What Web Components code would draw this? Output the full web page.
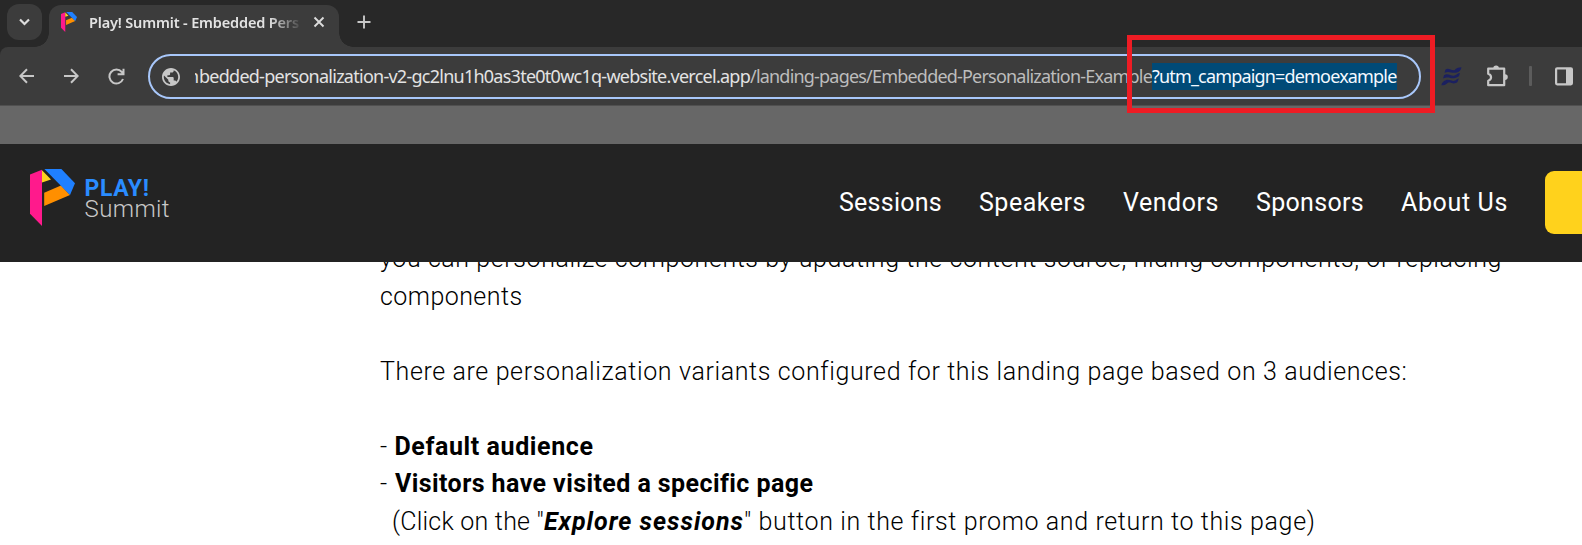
<!DOCTYPE html>
<html lang="en">
<head>
<meta charset="utf-8">
<title>Play! Summit - Embedded Personalization Example</title>
<style>
html,body{margin:0;height:100%;overflow:hidden;background:#fff}
body{font-family:Roboto,"Liberation Sans",sans-serif}
</style>
</head>
<body>
<demo-window></demo-window>
<script>
const define = (name, html, setup) => customElements.define(name, class extends HTMLElement {
  connectedCallback() {
    if (this.shadowRoot) return;
    const t = document.createElement('template');
    t.innerHTML = html;
    this.attachShadow({mode: 'open'}).append(t.content.cloneNode(true));
    if (setup) setup(this);
  }
});

// Tracks its text so that it spans the width given in the "w" attribute.
define('fit-text', `<style>
:host{display:inline-block;white-space:pre;flex:none}
span{display:inline-block}
</style><span><slot></slot></span>`, el => {
  const w = +el.getAttribute('w');
  const span = el.shadowRoot.querySelector('span');
  el.style.width = w + 'px';
  const n = [...el.textContent].length;
  span.style.letterSpacing = (w - span.getBoundingClientRect().width) / n + 'px';
});

define('play-mark', `<style>:host{display:block;flex:none}svg{display:block;width:100%;height:100%}</style>
<svg viewBox="0 0 45 57" preserveAspectRatio="none">
<path fill="#ff1a8c" d="M0 5.6 12 .7V57L0 44.7z"/>
<path fill="#ffd11f" d="M12 1.3 21 10.4 12 13.6z"/>
<path fill="#ff8f00" d="M14.2 23.7 31 16.6 40 26 14.2 37z"/>
<path fill="#1f80ff" d="M14.4 0h17L45 14.3 40 26z"/></svg>`);

define('browser-tabs', `<style>
:host{display:flex;height:47px;background:#282828;color:#e3e3e3;font-family:"Noto Sans",sans-serif}
.search{box-sizing:border-box;width:35px;height:36px;margin:4px 0 0 7px;border-radius:12px;background:#3c3c3c;flex:none}
.tab{display:flex;align-items:center;position:relative;box-sizing:border-box;width:290px;height:42px;margin:5px 0 0 7px;padding:0 0 8px 12px;border-radius:12px 12px 0 0;background:#3c3c3c}
.tab:before,.tab:after{content:"";position:absolute;bottom:0;width:14px;height:14px}
.tab:before{left:-14px;background:radial-gradient(circle at 0 0,transparent 13.5px,#3c3c3c 14px)}
.tab:after{right:-14px;background:radial-gradient(circle at 100% 0,transparent 13.5px,#3c3c3c 14px)}
play-mark{width:16px;height:20px;margin-top:-1px}
.title{margin-left:12px;width:210px;font-size:14.5px;line-height:20px;font-weight:600;-webkit-mask:linear-gradient(90deg,#000 180px,transparent 214px);mask:linear-gradient(90deg,#000 180px,transparent 214px)}
svg{display:block;fill:none;stroke:#dcdcdc;stroke-width:1.9}
.close{margin-left:14px;width:12px;height:12px}
.add{margin:15px 0 0 18px;width:14px;height:14px;stroke:#c7c7c7}
</style>
<div class="search"><svg width="35" height="36"><path stroke-width="2.2" d="m13 15.5 4.500 4.500 4.500-4.500"/></svg></div>
<div class="tab"><play-mark></play-mark><div class="title"><fit-text w="210">Play! Summit - Embedded Pers</fit-text></div>
<svg class="close" viewBox="0 0 12 12"><path d="m1.500 1.500 9 9m0-9-9 9"/></svg></div>
<svg class="add" viewBox="0 0 14 14"><path d="M7 .5v13M.5 7h13"/></svg>`);

define('address-bar', `<style>
:host{display:flex;align-items:center;box-sizing:border-box;width:1272.500px;height:45px;border:2px solid #a8c7fa;border-radius:23px;padding-left:11.500px;font:18px/27px "Noto Sans",sans-serif;color:#e3e3e3;flex:none}
svg{width:18px;height:18px;flex:none;margin-right:15.500px}
.cut{display:flex;justify-content:flex-end;width:4px;overflow:hidden;height:27px}
.path{color:#bdbdbd}
.sel{background:#004a77;color:#f4f9ff}
</style>
<svg viewBox="2 2 20 20"><path fill="#c7c7c7" d="M12 2C6.480 2 2 6.480 2 12s4.480 10 10 10 10-4.480 10-10S17.520 2 12 2zm-1 17.930C7.050 19.440 4 16.080 4 12c0-.62.080-1.210.210-1.790L9 15v1c0 1.100.900 2 2 2v1.930zm6.900-2.540c-.260-.81-1-1.390-1.900-1.390h-1v-3c0-.55-.450-1-1-1H8v-2h2c.55 0 1-.450 1-1V7h2c1.100 0 2-.900 2-2v-.410c2.930 1.190 5 4.060 5 7.410 0 2.080-.800 3.970-2.100 5.390z"/></svg>
<span class="cut">m</span><fit-text w="551">bedded-personalization-v2-gc2lnu1h0as3te0t0wc1q-website.vercel.app</fit-text><fit-text class="path" w="402">/landing-pages/Embedded-Personalization-Example</fit-text><fit-text class="sel" w="244.500">?utm_campaign=demoexample</fit-text>`);

define('browser-toolbar', `<style>
:host{display:block;background:#282828}
.bar{display:flex;align-items:center;box-sizing:border-box;height:59px;padding-top:1px;background:#3c3c3c;border-radius:8px 0 0 0;border-bottom:1px solid #505050}
svg{display:block;flex:none;fill:none;stroke:#c7c7c7;stroke-width:2;margin-bottom:1px}
i{width:2.500px;height:20px;background:#5c5c5c;border-radius:1px;margin-left:21px;margin-bottom:1px}
</style>
<div class="bar">
<svg style="margin-left:19px" width="16" height="16"><path d="M15 8H1.500M8 1.200 1.300 8 8 14.800"/></svg>
<svg style="margin-left:28px" width="16" height="16"><path d="M1 8h13.500M8 1.200 14.700 8 8 14.800"/></svg>
<svg style="margin-left:29px" width="17" height="17"><path d="M15 11A7 7 0 1 1 13.800 4L15 5.600M15.500.8v5.500H9.600"/></svg>
<address-bar style="margin-left:23px"></address-bar>
<svg style="margin-left:20.500px" width="21" height="19" viewBox="0 0 21 19"><path fill="#1b2060" stroke="none" d="M4.500 2.500C7.500.5 10 3.500 13 3.300 14.500 3 14.500.5 20.500.2 20 3 18.500 5 15 5.700 10.500 6.500 8.500 3.800 3.500 5.800zM3 8.200C6.500 5.800 9.500 9 12.500 8.800 15.500 8.500 15.500 6.300 19 6L18 9.300C16.500 9.600 16 11 13 11.300 9.500 11.800 7.500 9.300 2 11.500zM.3 18.300C.8 15.500 3 13.300 6 12.800 9.500 12.500 11 14.300 13.500 13.800 15.500 13.300 15.500 12 17.800 11.600L16.500 15C14 17 11.500 16.500 9 15.600 5.500 14.800 6.500 18.300.3 18.300z"/></svg>
<svg style="margin-left:24px;margin-bottom:2px" width="22" height="22"><path stroke-width="2.200" stroke-linejoin="round" d="M2.200 3.700H18.200V20.200H2.200V15.700C6 14.500 6 10 2.200 8.700z"/><path fill="#c7c7c7" stroke="none" d="M7.300 3.200a2.800 2.800 0 0 1 5.600 0zM19 9.300a2.800 2.800 0 0 1 0 5.600z"/></svg>
<i></i>
<svg style="margin-left:23.500px" width="18" height="19"><path stroke-width="2.200" d="M2.100 1.300h13.800q1 0 1 1v14q0 1-1 1H2.100q-1 0-1-1v-14q0-1 1-1z"/><path fill="#c7c7c7" stroke="none" d="M11 1h6v17h-6z"/></svg>
</div>`);

define('site-header', `<style>
:host{display:flex;align-items:center;position:relative;z-index:1;box-sizing:border-box;height:118px;background:#232323;color:#fff;padding-left:30px;overflow:hidden}
play-mark{width:45px;height:57px;margin-top:-12px}
.name{margin-left:9.500px;width:89.500px;margin-top:-8px;font-size:24px;line-height:21.500px}
.name fit-text{display:block}
b{font-weight:700;color:#2a8cff;font-size:23px}
.s{font-weight:300;color:#c8c8c8}
nav{display:flex;gap:37px;margin-left:669px;font-size:25px;line-height:30px}
.cta{width:120px;height:63px;border-radius:9px;background:#ffd21c;margin:-1px 0 0 37px;flex:none}
</style>
<play-mark></play-mark>
<div class="name"><b><fit-text w="65">PLAY!</fit-text></b><fit-text class="s" w="85.500">Summit</fit-text></div>
<nav><fit-text w="103">Sessions</fit-text><fit-text w="107">Speakers</fit-text><fit-text w="96">Vendors</fit-text><fit-text w="108">Sponsors</fit-text><fit-text w="107">About Us</fit-text></nav>
<div class="cta"></div>`);

define('article-text', `<style>
:host{display:block;margin:-22px 0 0 380px;font-size:25px;line-height:37.500px;font-weight:300;color:#000}
div{height:37.500px;white-space:nowrap;display:flex}
b{font-weight:700}
</style>
<div><fit-text w="1122">you can personalize components by updating the content source, hiding components, or replacing</fit-text></div>
<div><fit-text w="142.500">components</fit-text></div>
<div></div>
<div><fit-text w="1027">There are personalization variants configured for this landing page based on 3 audiences:</fit-text></div>
<div></div>
<div><fit-text w="14.500">- </fit-text><b><fit-text w="199">Default audience</fit-text></b></div>
<div><fit-text w="15">- </fit-text><b><fit-text w="418">Visitors have visited a specific page</fit-text></b></div>
<div style="padding-left:12px"><fit-text w="152">(Click on the "</fit-text><b><i><fit-text w="200">Explore sessions</fit-text></i></b><fit-text w="571">" button in the first promo and return to this page)</fit-text></div>`);

define('demo-window', `<style>
:host{display:block;position:relative;width:1582px;height:545px;overflow:hidden}
.strip{height:38px;background:#676767}
.mark{position:absolute;left:1127px;top:35px;width:308px;height:78px;box-sizing:border-box;border:5px solid #ee1c24;z-index:2}
</style>
<browser-tabs></browser-tabs><browser-toolbar></browser-toolbar><div class="strip"></div>
<site-header></site-header><article-text></article-text><div class="mark"></div>`);
</script>
</body>
</html>
